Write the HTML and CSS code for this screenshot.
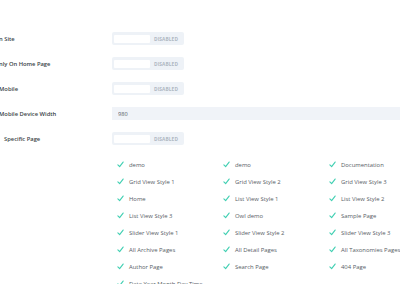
FILE: index.html
```html
<!DOCTYPE html>
<html lang="en">
<head>
    <meta charset="UTF-8">
    <meta name="viewport" content="width=device-width, initial-scale=1.0">
    <link rel="stylesheet" href="styles.css">
    <title>Display Settings</title>
</head>
<body>
    <div class="settings">
        <div class="row">
            <label class="label cut">n Site</label>
            <div class="toggle"><span class="knob"></span><span class="state">DISABLED</span></div>
        </div>
        <div class="row">
            <label class="label cut">nly On Home Page</label>
            <div class="toggle"><span class="knob"></span><span class="state">DISABLED</span></div>
        </div>
        <div class="row">
            <label class="label cut">Mobile</label>
            <div class="toggle"><span class="knob"></span><span class="state">DISABLED</span></div>
        </div>
        <div class="row">
            <label class="label cut">Mobile Device Width</label>
            <input class="field" type="text" value="980">
        </div>
        <div class="row">
            <label class="label indent">Specific Page</label>
            <div class="toggle"><span class="knob"></span><span class="state">DISABLED</span></div>
        </div>

        <ul class="pages" id="pages"></ul>
    </div>

    <script>
        let pages = [
            'demo', 'demo', 'Documentation',
            'Grid View Style 1', 'Grid View Style 2', 'Grid View Style 3',
            'Home', 'List View Style 1', 'List View Style 2',
            'List View Style 3', 'Owl demo', 'Sample Page',
            'Slider View Style 1', 'Slider View Style 2', 'Slider View Style 3',
            'All Archive Pages', 'All Detail Pages', 'All Taxonomies Pages',
            'Author Page', 'Search Page', '404 Page',
            'Date Year Month Day Time'
        ];

        let check = '<svg class="check" viewBox="0 0 8 8" width="7" height="7"><path d="M1 4.4 L3 6.4 L7 1.2" fill="none" stroke="#43d0b3" stroke-width="1.3" stroke-linecap="round" stroke-linejoin="round"/></svg>';

        let list = document.getElementById('pages');
        for (let name of pages) {
            list.innerHTML += `<li>${check}<span>${name}</span></li>`;
        }
    </script>
</body>
</html>
```

FILE: styles.css
```css
body {
    margin: 0;
    background-color: #fff;
    font-family: "Open Sans", "Liberation Sans", sans-serif;
    overflow: hidden;
}

.settings {
    padding-top: 26px;
}

.row {
    display: grid;
    grid-template-columns: 112px 1fr;
    align-items: center;
    height: 25px;
}

.label {
    font-size: 5.8px;
    font-weight: 600;
    color: #3a3f47;
    white-space: nowrap;
}

.label.cut {
    margin-left: -1px;
}

.label.indent {
    margin-left: 4px;
}

.toggle {
    display: flex;
    align-items: center;
    width: 72px;
    height: 13px;
    padding: 0 2px;
    box-sizing: border-box;
    background-color: #eef2f7;
    border-radius: 2px;
}

.knob {
    width: 36px;
    height: 8px;
    background-color: #fff;
    border-radius: 1px;
}

.state {
    margin-left: 4px;
    font-size: 4.8px;
    font-weight: 700;
    color: #aeb7c2;
    letter-spacing: 0.1px;
}

.field {
    height: 13px;
    width: 100%;
    margin: 0;
    padding: 0 0 0 6px;
    border: none;
    box-sizing: border-box;
    background-color: #f0f3f8;
    font-family: "Open Sans", "Liberation Sans", sans-serif;
    font-size: 5.6px;
    color: #555b63;
    outline: none;
}

.pages {
    list-style: none;
    margin: 5px 0 0 117px;
    padding: 0;
    display: grid;
    grid-template-columns: 106px 106px auto;
    grid-auto-rows: 17px;
}

.pages li {
    display: flex;
    align-items: center;
    white-space: nowrap;
    font-size: 5.9px;
    color: #575d66;
}

.check {
    flex-shrink: 0;
    margin-right: 5px;
}
```
